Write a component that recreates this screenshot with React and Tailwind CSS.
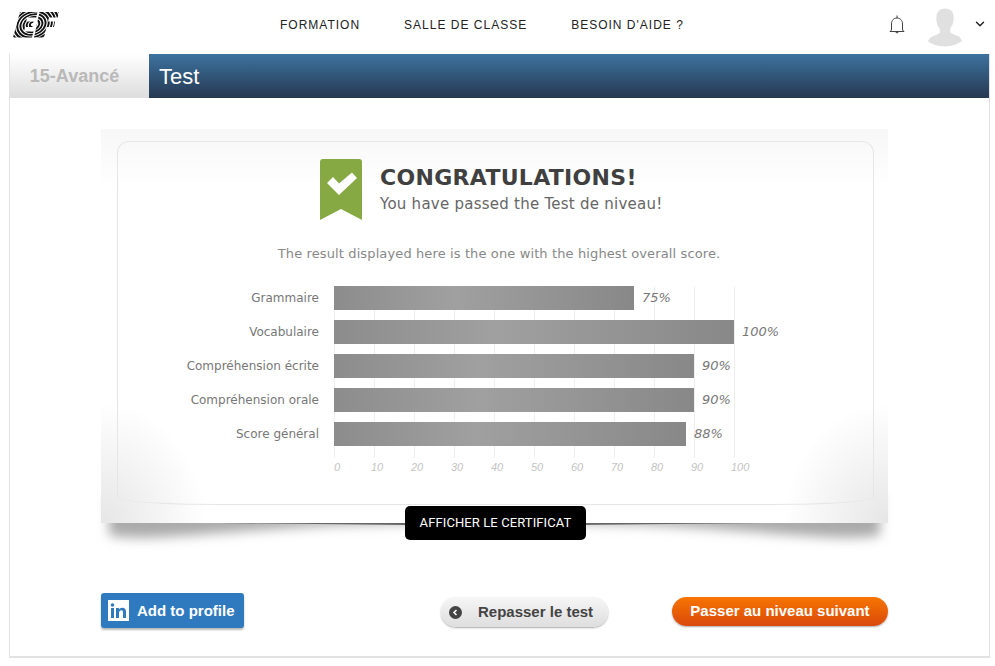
import { ChevronDown } from "lucide-react";

const scores = [
  { label: "Grammaire", value: 75 },
  { label: "Vocabulaire", value: 100 },
  { label: "Compréhension écrite", value: 90 },
  { label: "Compréhension orale", value: 90 },
  { label: "Score général", value: 88 },
];

const ticks = [0, 10, 20, 30, 40, 50, 60, 70, 80, 90, 100];
const rings = [1, 2, 3, 4, 5, 6, 7, 8, 9, 10];

function EfLogo() {
  return (
    <svg width="46" height="26" viewBox="0 0 46 26">
      <defs>
        <clipPath id="ef-e">
          <path d="M7 0H24.500L23.200 5.500H14L13.200 9.500H20.500L19.500 15H12L11 19.500H20.500L19 25.500H0Z" />
        </clipPath>
        <clipPath id="ef-f">
          <path d="M26.500 0H46L44.700 5.500H36L35 9.500H42L41 15H33.500L31 25.500H21Z" />
        </clipPath>
        <g id="ef-rings" fill="none" stroke="#111" strokeWidth="1.900" transform="translate(2.660 0) skewX(-12)">
          {rings.map((n) => (
            <ellipse key={n} cx="20" cy="12.500" rx={n * 3.1} ry={n * 2.6} />
          ))}
        </g>
      </defs>
      <use href="#ef-rings" clipPath="url(#ef-e)" />
      <use href="#ef-rings" clipPath="url(#ef-f)" />
    </svg>
  );
}

function Bell() {
  return (
    <svg width="18" height="20" viewBox="0 0 18 20" fill="none" stroke="#444" strokeWidth="1">
      <path d="M9 .5v2.500M3.500 15V9c0-3.500 2.200-6 5.500-6s5.500 2.500 5.500 6v6l1.500 1.500H2z" />
      <path d="M7.500 16.500c0 1.800 3 1.800 3 0" />
    </svg>
  );
}

function Avatar() {
  return (
    <svg width="34" height="39" viewBox="0 0 36 40" fill="#e0e0e0">
      <path d="M18 0c5.500 0 9 3 9 8 0 2 .3 4-.2 6-.5 3-1.800 5-3.300 7v4c2 2 6 3 9 4.500 1.500 1 2.500 2.500 3.500 4.500-3 3-10 6-18 6S3 37 0 34.500c1-2 2-3.500 3.500-4.500 3-1.500 7-2.500 9-4.500v-4c-1.500-2-2.800-4-3.300-7-.5-2-.4-4-.2-6C9 3.500 13 0 18 0z" />
    </svg>
  );
}

function Ribbon() {
  return (
    <svg width="42" height="61" viewBox="0 0 42 61">
      <path d="M3 0h36a3 3 0 0 1 3 3v58L21 50 0 61V3a3 3 0 0 1 3-3z" fill="#86a943" />
      <path d="M7 24l6-6 6 6.500L32 13.500l5 5.500-18 17z" fill="#fff" />
    </svg>
  );
}

function LinkedIn() {
  return (
    <svg width="21" height="21" viewBox="0 0 21 21">
      <rect width="21" height="21" fill="#fff" />
      <rect x="3" y="8" width="3" height="10" fill="#2f7abf" />
      <circle cx="4.500" cy="5" r="1.800" fill="#2f7abf" />
      <path d="M8 8h3v1.500c.7-1 1.800-1.800 3.300-1.800 2.700 0 3.700 1.700 3.700 4.300v6h-3v-5.500c0-1.300-.4-2.200-1.600-2.200-1.300 0-2.400.9-2.400 2.400V18H8z" fill="#2f7abf" />
    </svg>
  );
}

function ResultChart() {
  return (
    <div className="mt-[23px] ml-[67px]">
      <div className="relative">
        <div className="absolute top-0 bottom-[-12px] left-[149px] w-[400px]">
          {ticks.map((t) => (
            <div
              key={t}
              className="absolute top-0 bottom-0 w-px bg-[#eeeeee]"
              style={{ left: `${t * 4}px` }}
            />
          ))}
        </div>
        <div className="relative flex flex-col gap-[10px]">
          {scores.map((s) => (
            <div key={s.label} className="flex h-[24px] items-center">
              <div className="w-[134px] text-right text-[12px] text-[#777]">{s.label}</div>
              <div className="ml-[15px] flex items-center">
                <div
                  className="h-[24px] bg-[linear-gradient(90deg,#8c8c8c,#a0a0a0_40%,#888888)]"
                  style={{ width: `${s.value * 4}px` }}
                />
                <span className="ml-[8px] text-[13px] italic text-[#777]">{s.value}%</span>
              </div>
            </div>
          ))}
        </div>
      </div>
      <div className="relative mt-[14px] ml-[149px] h-[14px] font-['Liberation_Sans',sans-serif] text-[11px] italic leading-[14px] text-[#c4c4c4]">
        {ticks.map((t) => (
          <span key={t} className="absolute" style={{ left: `${t === 0 ? 0 : t * 4 - 3}px` }}>
            {t}
          </span>
        ))}
      </div>
    </div>
  );
}

export default function App() {
  return (
    <div className="h-[666px] w-[995px] overflow-hidden bg-white font-['Liberation_Sans',sans-serif]">
      <header className="flex h-[54px] items-center">
        <div className="mb-[5px] ml-[13px] w-[46px]">
          <EfLogo />
        </div>
        <nav className="mb-[4px] ml-[221px] flex gap-[44px] text-[12px] tracking-[1px] text-[#222]">
          <span>FORMATION</span>
          <span>SALLE DE CLASSE</span>
          <span>BESOIN D'AIDE ?</span>
        </nav>
        <div className="ml-auto flex items-center">
          <div className="mb-[4px]">
            <Bell />
          </div>
          <div className="ml-[22px]">
            <Avatar />
          </div>
          <ChevronDown size={14} strokeWidth={2.500} className="mr-[8px] mb-[6px] ml-[11px] text-[#222]" />
        </div>
      </header>

      <main className="ml-[9px] h-[604px] w-[981px] border-x border-b-2 border-[#e2e2e2]">
        <div className="flex h-[44px]">
          <div className="flex w-[139px] items-center justify-center bg-[linear-gradient(#ffffff,#dddddd)] pr-[10px] text-[18px] font-bold text-[#b9b9b9]">
            15-Avancé
          </div>
          <div className="flex flex-1 items-center bg-[linear-gradient(#3d73a0,#263851)] pl-[10px] text-[22px] text-white">
            Test
          </div>
        </div>

        <div className="relative mt-[31px] ml-[91px] w-[787px]">
          <svg
            className="absolute top-[364px] left-[-12px]"
            width="811"
            height="70"
            viewBox="0 0 811 70"
          >
            <defs>
              <filter id="soft" x="-5%" y="-30%" width="110%" height="160%">
                <feGaussianBlur stdDeviation="6" />
              </filter>
              <filter id="thin" x="-5%" y="-200%" width="110%" height="500%">
                <feGaussianBlur stdDeviation="0.600" />
              </filter>
            </defs>
            <path
              d="M20 0V42C50 50 130 38 250 32L405 28 560 32C680 38 760 50 791 42V0Z"
              fill="#aaaaaa"
              filter="url(#soft)"
            />
            <path d="M130 30H681L405 33Z" fill="#666" filter="url(#thin)" />
          </svg>

          <div className="relative h-[394px] bg-[radial-gradient(ellipse_105px_120px_at_0%_100%,#e6e6e6,transparent),radial-gradient(ellipse_105px_120px_at_100%_100%,#e6e6e6,transparent),linear-gradient(#f7f7f7,#ffffff_60px)] pt-[12px] pr-[14px] pl-[16px]">
            <div className="h-[364px] rounded-[12px_12px_100px_100px/12px_12px_8px_8px] border border-[#e6e6e6] font-['DejaVu_Sans',sans-serif]">
              <div className="mt-[17px] ml-[202px] flex">
                <Ribbon />
                <div className="ml-[18px] pt-[6px]">
                  <div className="text-[22px] font-bold leading-[26px] tracking-[0.3px] text-[#404040]">CONGRATULATIONS!</div>
                  <div className="mt-[3px] text-[15px] leading-[20px] tracking-[0.25px] text-[#666]">You have passed the Test de niveau!</div>
                </div>
              </div>
              <p className="mt-[25px] pl-[7px] text-center text-[13px] leading-[18px] tracking-[0.12px] text-[#888]">
                The result displayed here is the one with the highest overall score.
              </p>
              <ResultChart />
            </div>
          </div>

          <button className="absolute top-[377px] left-[304px] h-[34px] w-[181px] rounded-[5px] bg-black font-['Roboto',sans-serif] text-[13px] tracking-[0.1px] text-white">
            AFFICHER LE CERTIFICAT
          </button>
        </div>

        <div className="mt-[70px] ml-[91px] flex w-[787px] items-start">
          <button className="flex h-[35px] w-[143px] items-center rounded-[3px] bg-[#2f7abf] pl-[7px] text-[15px] font-bold text-white shadow-[0_2px_2px_#bbb]">
            <LinkedIn />
            <span className="ml-[8px] pt-[1px]">Add to profile</span>
          </button>
          <button className="mt-[4px] ml-[197px] flex h-[30px] w-[167px] items-center rounded-full bg-[linear-gradient(#f6f6f6,#dedede)] pl-[8px] text-[15px] font-bold text-[#444] shadow-[0_1px_2px_#aaa]">
            <span className="flex h-[13px] w-[13px] items-center justify-center rounded-full bg-[#444]">
              <svg width="7" height="7" viewBox="0 0 7 7" fill="none" stroke="#fff" strokeWidth="1.600">
                <path d="M4.500 1L2 3.500 4.500 6" />
              </svg>
            </span>
            <span className="ml-[16px]">Repasser le test</span>
          </button>
          <button className="mt-[4px] ml-auto h-[29px] w-[216px] rounded-full bg-[linear-gradient(#f77500,#d9490c)] text-[15px] font-bold text-white shadow-[0_1px_2px_#aaa]">
            Passer au niveau suivant
          </button>
        </div>
      </main>
    </div>
  );
}
